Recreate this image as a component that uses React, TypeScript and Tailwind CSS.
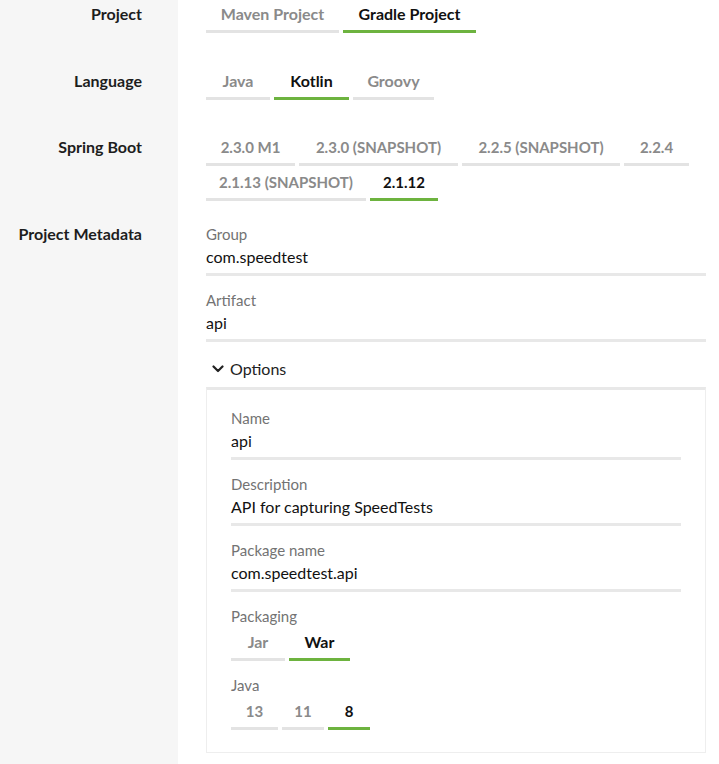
import type { ReactNode } from 'react'

type Tab = { label: string; width: number; selected?: boolean }

const FONT = "font-['Lato',sans-serif]"

function Tabs({ items, small }: { items: Tab[]; small?: boolean }) {
  return (
    <div className="flex flex-wrap gap-x-1">
      {items.map((t) => (
        <div
          key={t.label}
          style={{ width: t.width }}
          className={
            'flex h-[35px] items-center justify-center border-b-[3px] font-bold whitespace-nowrap ' +
            (small ? 'text-[15px] ' : 'text-[16px] ') +
            (t.selected ? 'border-[#6db33f] text-[#111]' : 'border-[#e3e3e3] text-[#8a8a8a]')
          }
        >
          {t.label}
        </div>
      ))}
    </div>
  )
}

function Row({ label, pb, children }: { label: string; pb: string; children: ReactNode }) {
  return (
    <div className="flex">
      <div className="w-[178px] shrink-0 bg-[#f6f6f6] pr-9 text-right">
        <div className="flex h-8 items-center justify-end text-[16px] font-bold text-[#1d1d1d]">{label}</div>
      </div>
      <div className={'flex-1 pl-7 pr-[13px] ' + pb}>{children}</div>
    </div>
  )
}

function Field({ label, value, last }: { label: string; value: string; last?: boolean }) {
  return (
    <div className={last ? '' : 'mb-[14px]'}>
      <div className="h-5 text-[15px] leading-5 text-[#737373]">{label}</div>
      <div className="mt-[2px] border-b-[3px] border-[#e8e8e8] pb-[5px] text-[16px] leading-[22px] text-[#111]">
        {value}
      </div>
    </div>
  )
}

export default function App() {
  return (
    <div className={'-mt-0.5 flex min-h-[766px] flex-col bg-white ' + FONT}>
      <Row label="Project" pb="pb-8">
        <Tabs
          items={[
            { label: 'Maven Project', width: 133 },
            { label: 'Gradle Project', width: 133, selected: true },
          ]}
        />
      </Row>
      <Row label="Language" pb="pb-[31px]">
        <Tabs
          items={[
            { label: 'Java', width: 64 },
            { label: 'Kotlin', width: 75, selected: true },
            { label: 'Groovy', width: 81 },
          ]}
        />
      </Row>
      <Row label="Spring Boot" pb="pb-[17px]">
        <Tabs
          small
          items={[
            { label: '2.3.0 M1', width: 89 },
            { label: '2.3.0 (SNAPSHOT)', width: 159 },
            { label: '2.2.5 (SNAPSHOT)', width: 158 },
            { label: '2.2.4', width: 65 },
            { label: '2.1.13 (SNAPSHOT)', width: 160 },
            { label: '2.1.12', width: 68, selected: true },
          ]}
        />
      </Row>
      <Row label="Project Metadata" pb="pb-0">
        <div className="pt-[6px]">
          <Field label="Group" value="com.speedtest" />
          <Field label="Artifact" value="api" last />
          <div className="mt-4 flex h-[22px] items-center gap-[6px] pl-[6px] text-[16px] text-[#222]">
            <svg width="12" height="8" viewBox="0 0 12 8" fill="none">
              <path d="M1.5 1.5 L6 6 L10.5 1.5" stroke="#222" strokeWidth="2.2" strokeLinecap="round" strokeLinejoin="round" />
            </svg>
            <span>Options</span>
          </div>
          <div className="mt-[7px] border border-t-[3px] border-[#eeeeee] border-t-[#e8e8e8] px-6 pt-[18px] pb-[22px]">
            <Field label="Name" value="api" />
            <Field label="Description" value="API for capturing SpeedTests" />
            <Field label="Package name" value="com.speedtest.api" />
            <div className="mb-[14px]">
              <div className="h-5 text-[15px] leading-5 text-[#737373]">Packaging</div>
              <Tabs
                items={[
                  { label: 'Jar', width: 54 },
                  { label: 'War', width: 61, selected: true },
                ]}
              />
            </div>
            <div>
              <div className="h-5 text-[15px] leading-5 text-[#737373]">Java</div>
              <Tabs
                small
                items={[
                  { label: '13', width: 47 },
                  { label: '11', width: 42 },
                  { label: '8', width: 42, selected: true },
                ]}
              />
            </div>
          </div>
        </div>
      </Row>
      <div className="flex flex-1">
        <div className="w-[178px] bg-[#f6f6f6]" />
      </div>
    </div>
  )
}
